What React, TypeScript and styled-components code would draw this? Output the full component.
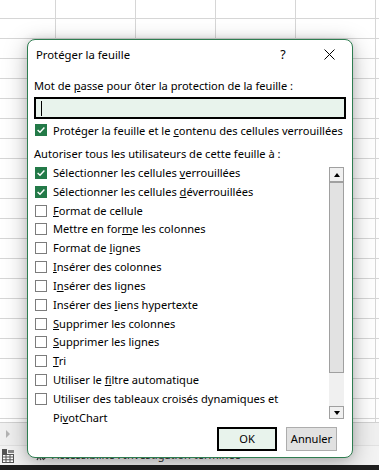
import React from "react";
import styled, { createGlobalStyle, css } from "styled-components";

const GlobalStyle = createGlobalStyle`
  html, body { margin: 0; padding: 0; }
  body {
    font-family: "Noto Sans", "Open Sans", sans-serif;
    font-size: 11.1px;
    color: #000;
    overflow: hidden;
  }
`;

const GREEN = "#237a48";
const FIELD_BG = "#e8f3ec";

const Screen = styled.div`
  position: relative;
  width: 379px;
  height: 470px;
  display: flex;
  flex-direction: column;
  overflow: hidden;
  background: #fff;
`;

const Sheet = styled.div`
  flex: 1;
  background-color: #fff;
  background-image: linear-gradient(to right, #d6d6d6 1px, transparent 1px),
    linear-gradient(to bottom, #d6d6d6 1px, transparent 1px);
  background-size: 80px 100%, 100% 20px;
  background-position: 55px 0, 0 18px;
`;

const SheetTabs = styled.div`
  box-sizing: border-box;
  height: 23px;
  flex: none;
  background: #f0f0f0;
  border-top: 1px solid #d2d2d2;
  display: flex;
  align-items: center;
  padding-left: 6px;
`;

const TabArrow = styled.span`
  width: 0;
  height: 0;
  border-top: 4px solid transparent;
  border-bottom: 4px solid transparent;
  border-left: 4px solid #b4b4b4;
`;

const StatusBar = styled.div`
  box-sizing: border-box;
  height: 20px;
  flex: none;
  background: #f3f3f3;
  border-top: 1px solid #e2e2e2;
  display: flex;
  align-items: center;
  padding-left: 2px;
  gap: 20px;
  font-size: 11px;
  color: #333;
`;

const StatusGroup = styled.span`
  display: flex;
  align-items: center;
  gap: 5px;
  margin-top: -3px;
`;

const Taskbar = styled.div`
  height: 5px;
  flex: none;
  background: #1f1f1f;
`;

/* ---------- dialog ---------- */

const Dialog = styled.div`
  position: absolute;
  top: 39px;
  left: 27px;
  width: 326px;
  box-sizing: border-box;
  border: 1px solid #2e7d50;
  border-radius: 8px;
  background: #fff;
  box-shadow: 0 6px 24px rgba(0, 0, 0, 0.28), 0 0 8px rgba(0, 0, 0, 0.12);
  display: flex;
  flex-direction: column;
`;

const TitleBar = styled.div`
  height: 29px;
  display: flex;
  align-items: center;
  padding: 0 8px;
`;

const TitleText = styled.span`
  flex: 1;
  font-size: 11.3px;
`;

const TitleButton = styled.span`
  width: 30px;
  display: flex;
  justify-content: center;
  align-items: center;
  font-size: 12.5px;
  & + & {
    margin-left: 16px;
  }
`;

const DialogBody = styled.div`
  display: flex;
  flex-direction: column;
  padding: 0 6px 6px;
`;

const Label = styled.div<{ $gap: number }>`
  margin-top: ${(p) => p.$gap}px;
  line-height: 16px;
  white-space: nowrap;
`;

const PasswordField = styled.div`
  margin-top: 3px;
  height: 22px;
  box-sizing: border-box;
  border: 2px solid #000;
  background: ${FIELD_BG};
  display: flex;
  align-items: center;
  padding-left: 5px;
`;

const Caret = styled.span`
  width: 1px;
  height: 15px;
  background: #000;
`;

const CheckRow = styled.label`
  margin-top: 2px;
  height: 18px;
  display: flex;
  align-items: center;
  gap: 6px;
  padding-left: 1px;
  white-space: nowrap;
`;

const Box = styled.span<{ $checked?: boolean; $inList?: boolean }>`
  flex: none;
  width: 12px;
  height: 12px;
  box-sizing: border-box;
  border: 1px solid #7c7c7c;
  background: #fff;
  display: flex;
  align-items: center;
  justify-content: center;
  ${(p) =>
    p.$checked &&
    css`
      background: ${GREEN};
      border-color: ${GREEN};
    `}
  ${(p) =>
    p.$inList &&
    css`
      margin-top: 3px;
    `}
`;

const ListArea = styled.div`
  margin-top: 1px;
  display: flex;
  align-items: flex-start;
`;

const ItemList = styled.div`
  flex: 1;
  display: flex;
  flex-direction: column;
  padding: 1px 4px 0 1px;
`;

const Item = styled.div`
  display: flex;
  align-items: flex-start;
  gap: 6px;
  line-height: 18.83px;
`;

const ItemText = styled.span`
  flex: 1;
`;

const Word = styled.span`
  white-space: nowrap;
`;

const Scrollbar = styled.div`
  flex: none;
  width: 15px;
  height: 252px;
  margin: 4px 2px 0 0;
  display: flex;
  flex-direction: column;
  background: #f0f0f0;
`;

const ScrollButton = styled.div<{ $h: number }>`
  height: ${(p) => p.$h}px;
  box-sizing: border-box;
  border: 1px solid #a0a0a0;
  background: #f0f0f0;
  display: flex;
  align-items: center;
  justify-content: center;
`;

const Arrow = styled.span<{ $down?: boolean }>`
  width: 0;
  height: 0;
  border-left: 3.5px solid transparent;
  border-right: 3.5px solid transparent;
  ${(p) =>
    p.$down
      ? css`
          border-top: 4px solid #000;
        `
      : css`
          border-bottom: 4px solid #000;
        `}
`;

const Thumb = styled.div`
  height: 192px;
  box-sizing: border-box;
  border: 1px solid #a0a0a0;
  border-top: 2px solid #a0a0a0;
  background: #e2e2e2;
  margin-top: -1px;
`;

const Track = styled.div`
  flex: 1;
`;

const ButtonRow = styled.div`
  margin-top: -1px;
  display: flex;
  justify-content: flex-end;
  gap: 9px;
  padding-right: 9px;
`;

const DialogButton = styled.button<{ $primary?: boolean; $w: number }>`
  width: ${(p) => p.$w}px;
  height: 24px;
  box-sizing: border-box;
  font-family: inherit;
  font-size: 11.1px;
  color: #000;
  padding: 0;
  ${(p) =>
    p.$primary
      ? css`
          border: 2px solid #000;
          background: ${FIELD_BG};
        `
      : css`
          border: 1px solid #adadad;
          background: #e1e1e1;
        `}
`;

const Check = () => (
  <svg width="10" height="10" viewBox="0 0 10 10">
    <polyline points="1.6,5 4,7.3 8.4,2.6" fill="none" stroke="#fff" strokeWidth="1.4" />
  </svg>
);

const CloseIcon = () => (
  <svg width="11" height="11" viewBox="0 0 11 11">
    <path d="M0.5 0.5 L10.5 10.5 M10.5 0.5 L0.5 10.5" stroke="#000" strokeWidth="1" />
  </svg>
);

const CellModeIcon = () => (
  <svg width="12" height="14" viewBox="0 0 12 14">
    <rect x="0" y="0" width="5" height="5" fill="#555" />
    <rect x="0.5" y="5.5" width="11" height="8" fill="#fff" stroke="#555" />
    <path d="M4 5.5 V13.5 M8 5.5 V13.5 M0.5 8 H11.5 M0.5 10.8 H11.5" stroke="#555" strokeWidth="1" />
    <rect x="6" y="1" width="6" height="3" fill="#888" />
  </svg>
);

const AccessIcon = () => (
  <svg width="13" height="13" viewBox="0 0 13 13">
    <circle cx="5" cy="2.5" r="1.6" fill="#444" />
    <path d="M1 5 H9 M5 5 V8.5 L3 12 M5 8.5 L7 12" stroke="#444" strokeWidth="1.2" fill="none" />
    <path d="M8 10 L9.5 11.5 L12.5 8.5" stroke="#444" strokeWidth="1.2" fill="none" />
  </svg>
);

/* pre = words before the word holding the access key; lead/key/post = that word */
type Opt = { pre: string; lead: string; key: string; post: string; checked?: boolean };

const options: Opt[] = [
  { pre: "Sélectionner les cellules ", lead: "", key: "v", post: "errouillées", checked: true },
  { pre: "Sélectionner les cellules ", lead: "", key: "d", post: "éverrouillées", checked: true },
  { pre: "", lead: "", key: "F", post: "ormat de cellule" },
  { pre: "Mettre en ", lead: "for", key: "m", post: "e les colonnes" },
  { pre: "Format de ", lead: "", key: "l", post: "ignes" },
  { pre: "", lead: "", key: "I", post: "nsérer des colonnes" },
  { pre: "", lead: "I", key: "n", post: "sérer des lignes" },
  { pre: "Insérer des ", lead: "", key: "l", post: "iens hypertexte" },
  { pre: "", lead: "", key: "S", post: "upprimer les colonnes" },
  { pre: "", lead: "", key: "S", post: "upprimer les lignes" },
  { pre: "", lead: "", key: "T", post: "ri" },
  { pre: "Utiliser le ", lead: "", key: "f", post: "iltre automatique" },
  { pre: "Utiliser des tableaux croisés dynamiques et ", lead: "Pi", key: "v", post: "otChart" },
];

export default function App() {
  return (
    <>
      <GlobalStyle />
      <Screen>
        <Sheet />
        <SheetTabs>
          <TabArrow />
        </SheetTabs>
        <StatusBar>
          <CellModeIcon />
          <StatusGroup>
            <AccessIcon />
            Accessibilité : Investigation terminée
          </StatusGroup>
        </StatusBar>
        <Taskbar />

        <Dialog>
          <TitleBar>
            <TitleText>Protéger la feuille</TitleText>
            <TitleButton>?</TitleButton>
            <TitleButton>
              <CloseIcon />
            </TitleButton>
          </TitleBar>
          <DialogBody>
            <Label $gap={9}>
              Mot de <u>p</u>asse pour ôter la protection de la feuille :
            </Label>
            <PasswordField>
              <Caret />
            </PasswordField>
            <CheckRow>
              <Box $checked>
                <Check />
              </Box>
              <span>
                Protéger la feuille et le <u>c</u>ontenu des cellules verrouillées
              </span>
            </CheckRow>
            <Label $gap={7}>Autoriser tous les utilisateurs de cette feuille à :</Label>
            <ListArea>
              <ItemList>
                {options.map((o, i) => (
                  <Item key={i}>
                    <Box $checked={o.checked} $inList>
                      {o.checked && <Check />}
                    </Box>
                    <ItemText>
                      {o.pre}
                      <Word>
                        {o.lead}
                        <u>{o.key}</u>
                        {o.post}
                      </Word>
                    </ItemText>
                  </Item>
                ))}
              </ItemList>
              <Scrollbar>
                <ScrollButton $h={15}>
                  <Arrow />
                </ScrollButton>
                <Thumb />
                <Track />
                <ScrollButton $h={13}>
                  <Arrow $down />
                </ScrollButton>
              </Scrollbar>
            </ListArea>
            <ButtonRow>
              <DialogButton $primary $w={60}>OK</DialogButton>
              <DialogButton $w={51}>Annuler</DialogButton>
            </ButtonRow>
          </DialogBody>
        </Dialog>
      </Screen>
    </>
  );
}
